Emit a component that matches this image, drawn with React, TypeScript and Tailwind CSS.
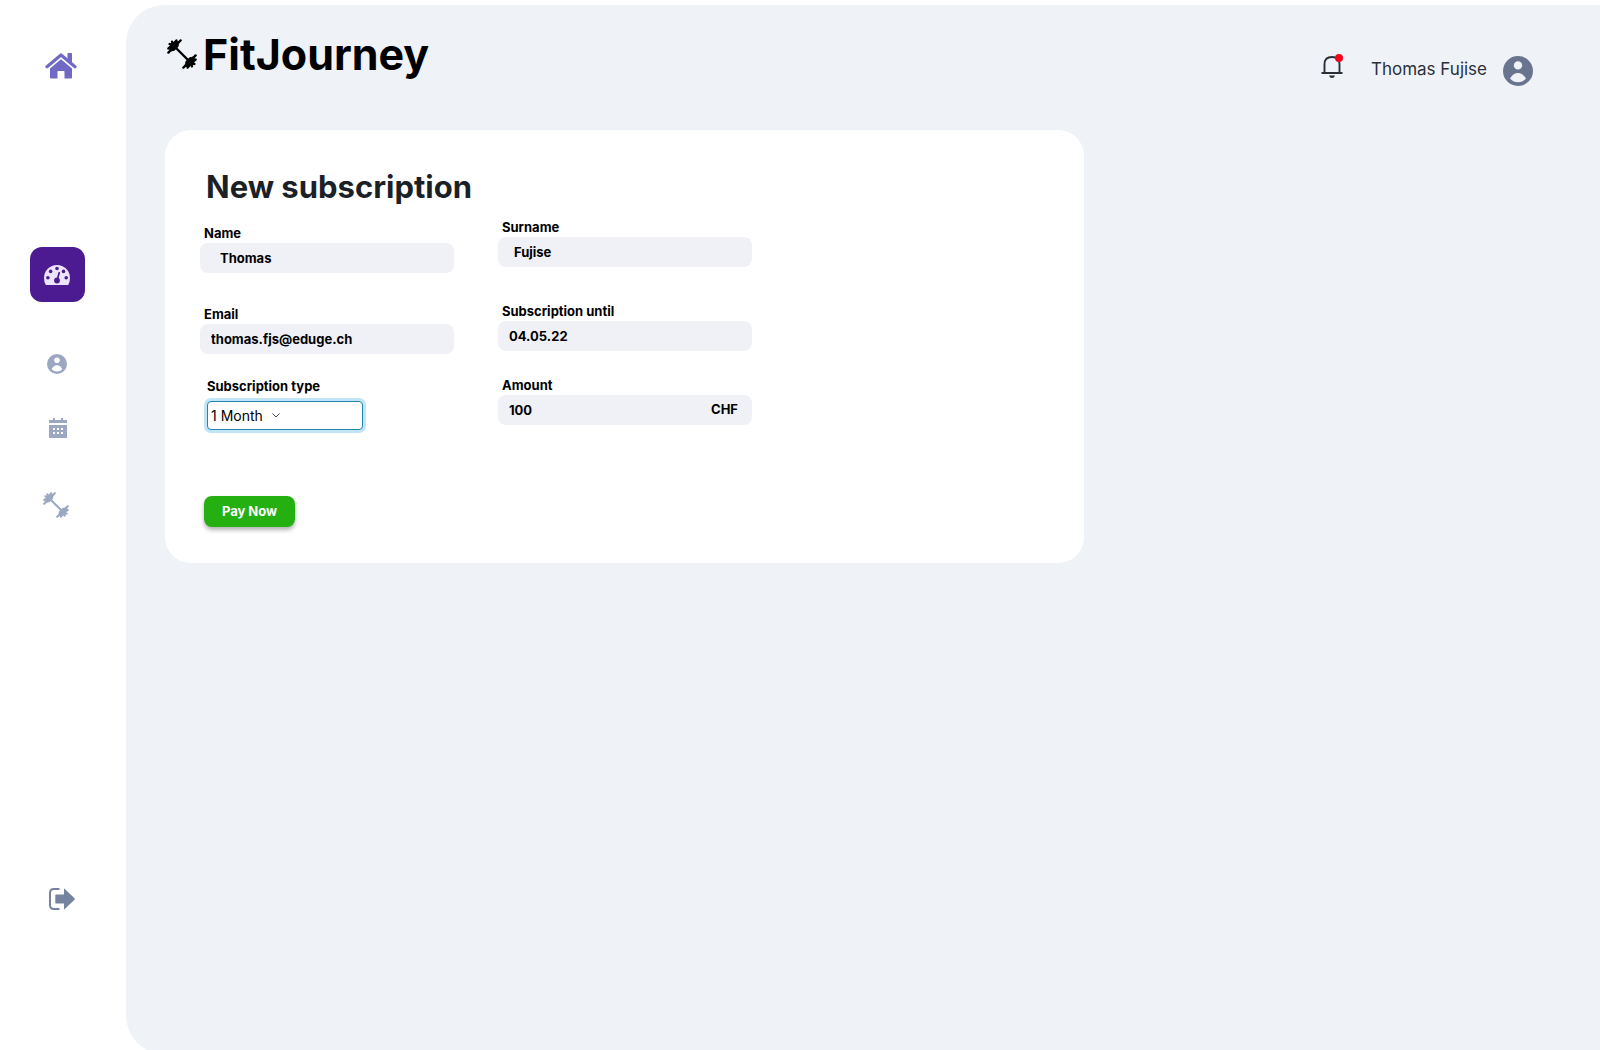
import { useState } from "react";
import type { ReactNode } from "react";

function HomeIcon() {
  return (
    <svg viewBox="0 0 32 26" className="h-[26px] w-8" fill="currentColor" aria-hidden="true">
      <path d="M22.500.700q0-.7.700-.7h3.100q.7 0 .7.700V10l-4.500-4z" />
      <path d="M2 13.700 16 2l14 11.700" fill="none" stroke="currentColor" strokeWidth="3.200" strokeLinecap="round" strokeLinejoin="round" />
      <path d="M16 6.200 27 15.400V24.500q0 1-1 1h-6.500v-7q0-.6-.6-.6h-5.800q-.6 0-.6.600v7H6q-1 0-1-1V15.400z" />
    </svg>
  );
}

function GaugeIcon() {
  return (
    <svg viewBox="0 0 26 20" className="h-5 w-[26px]" aria-hidden="true">
      <path d="M1.800 20Q0 17 0 13a13 13 0 0 1 26 0q0 4-1.800 7z" fill="currentColor" />
      <g fill="#4c1b92">
        <circle cx="3.900" cy="12.700" r="1.800" />
        <circle cx="6.600" cy="6.400" r="1.800" />
        <circle cx="13" cy="3.500" r="1.800" />
        <circle cx="19.500" cy="6.400" r="1.800" />
        <circle cx="22.200" cy="12.700" r="1.800" />
        <circle cx="13" cy="15.500" r="2.900" />
      </g>
      <path d="M13.200 15 15.200 7.700" stroke="#4c1b92" strokeWidth="1.700" strokeLinecap="round" />
    </svg>
  );
}

function PersonIcon({ className }: { className: string }) {
  return (
    <svg viewBox="0 0 30 30" className={className} fill="currentColor" fillRule="evenodd" aria-hidden="true">
      <path d="M15 0a15 15 0 1 1 0 30a15 15 0 0 1 0-30z M15 5.200a4.200 4.200 0 1 0 0 8.400a4.200 4.200 0 0 0 0-8.400z M7 22.500C9.500 18.500 12 17 15 17s5.500 1.500 8 5.500C20.500 25.300 18 26.200 15 26.200s-5.500-.9-8-3.700z" />
    </svg>
  );
}

function Dumbbell({ className }: { className: string }) {
  return (
    <svg viewBox="0 0 28 28" className={className} fill="none" stroke="currentColor" aria-hidden="true">
      <path d="M7 7 21 21" strokeWidth="2.300" />
      <g strokeLinecap="round">
        <path d="M4 9.500 9.500 4 M4.500 7 7 4.500 M6 9 9 6" strokeWidth="4" />
        <path d="M18.500 24 24 18.500 M21 23.500 23.500 21 M19 22 22 19" strokeWidth="4" />
        <path d="M1.300 12.700 3 11 M11 3 12.700 1.300 M1.300 8.800 3 7.500 M7.500 3 8.800 1.300 M2.500 4.700 4 5 M5 3.500 4.700 2.500" strokeWidth="2.200" />
        <path d="M15.300 26.700 17 25 M25 17 26.700 15.300 M26.700 19.200 25 20.500 M20.500 25 19.200 26.700 M25.500 23.300 24 23 M23 24.500 23.300 25.500" strokeWidth="2.200" />
      </g>
    </svg>
  );
}

function CalendarIcon() {
  return (
    <svg viewBox="0 0 18 20" className="h-5 w-[18px]" fill="currentColor" fillRule="evenodd" aria-hidden="true">
      <path d="M0 2h4V0h2v2h6V0h2v2h4v3H0z" />
      <path d="M0 7h18v13H0z M4 10v2h2v-2z M8 10v2h2v-2z M12 10v2h2v-2z M4 14v2h2v-2z M8 14v2h2v-2z M12 14v2h2v-2z" />
    </svg>
  );
}

function LogoutIcon() {
  return (
    <svg viewBox="0 0 26 22" className="h-[22px] w-[26px]" aria-hidden="true">
      <path d="M10.500 1H5Q1 1 1 5v12q0 4 4 4h5.500" fill="none" stroke="currentColor" strokeWidth="2" />
      <path d="M7 6.500h8V1.200q0-1 .8-.3L25.500 10.300q.6.700 0 1.400L15.800 21.100q-.8.700-.8-.3V15.500H7q-.7 0-.7-.7V7.200q0-.7.700-.7z" fill="currentColor" />
    </svg>
  );
}

function BellIcon() {
  return (
    <svg viewBox="0 0 22 24" className="h-6 w-[22px]" aria-hidden="true">
      <path d="M3.500 18V9.500Q3.500 2 11 2t7.500 7.500V18M0.500 18h21" fill="none" stroke="currentColor" strokeWidth="1.900" />
      <path d="M8 20.500h6q-.6 2.500-3 2.500t-3-2.500z" fill="currentColor" />
    </svg>
  );
}

function Field({
  id,
  label,
  value,
  className = "",
  inputClass = "px-[11px]",
  suffix,
}: {
  id: string;
  label: string;
  value: string;
  className?: string;
  inputClass?: string;
  suffix?: ReactNode;
}) {
  return (
    <div className={`flex flex-col ${className}`}>
      <label htmlFor={id} className="pl-1 text-[13px] leading-5 font-bold">
        {label}
      </label>
      <div className="flex h-[30px] items-center rounded-lg bg-[#f0f1f7] text-[13px] font-bold">
        <input
          id={id}
          defaultValue={value}
          className={`h-full min-w-0 flex-1 rounded-lg bg-transparent outline-none ${inputClass}`}
        />
        {suffix}
      </div>
    </div>
  );
}

const navLink = "flex items-center justify-center text-[#9ca8c1]";

export default function App() {
  const [plan, setPlan] = useState("1 Month");

  return (
    <div className="flex h-screen overflow-hidden bg-white pt-[5px] font-['Inter',sans-serif] text-black">
      <nav aria-label="Main" className="flex w-[126px] shrink-0 flex-col items-center pr-3 pt-12">
        <a href="#home" aria-label="Home" className="ml-2 flex text-[#7069c6]">
          <HomeIcon />
        </a>
        <a
          href="#dashboard"
          aria-label="Dashboard"
          className="mt-[168px] flex size-[55px] items-center justify-center rounded-xl bg-[#4c1b92] text-[#ece4fa]"
        >
          <GaugeIcon />
        </a>
        <a href="#profile" aria-label="Profile" className={`mt-[52px] ${navLink}`}>
          <PersonIcon className="size-5" />
        </a>
        <a href="#calendar" aria-label="Calendar" className={`mt-11 ml-0.5 ${navLink}`}>
          <CalendarIcon />
        </a>
        <a href="#workouts" aria-label="Workouts" className={`mt-[54px] mr-0.5 ${navLink}`}>
          <Dumbbell className="size-[26px]" />
        </a>
        <a href="#logout" aria-label="Log out" className="mt-auto mb-[140px] ml-2.5 flex text-[#76839f]">
          <LogoutIcon />
        </a>
      </nav>

      <main className="-mb-1 min-w-0 flex-1 rounded-l-[38px] bg-[#eff3f8] pl-[39px]">
        <header className="flex h-[125px] items-start justify-between pr-[67px]">
          <div className="flex items-center gap-1.5 pt-5 pl-0.5">
            <Dumbbell className="size-[30px]" />
            <span className="text-[43px] leading-[58px] font-bold">FitJourney</span>
          </div>
          <div className="flex items-center pt-[50px] text-[#2b3038]">
            <button type="button" aria-label="Notifications" className="relative mb-2 flex">
              <BellIcon />
              <span className="absolute -top-px right-0 size-2 rounded-full bg-[#f5041c]" />
            </button>
            <span className="ml-7 mb-1 text-[17px] leading-6">Thomas Fujise</span>
            <PersonIcon className="ml-4 size-[30px] text-[#69758f]" />
          </div>
        </header>

        <section className="w-full max-w-[919px] rounded-[26px] bg-white px-[35px] pt-9 pb-9">
          <h1 className="pl-1.5 text-[31px] leading-[42px] font-bold text-[#1b1f26]">New subscription</h1>
          <form onSubmit={(e) => e.preventDefault()}>
            <div className="flex gap-11">
              <div className="flex w-[254px] flex-col pt-[15px]">
                <Field id="name" label="Name" value="Thomas" inputClass="px-5" />
                <Field id="email" label="Email" value="thomas.fjs@eduge.ch" className="mt-[31px]" />
                <label htmlFor="plan" className="mt-[22px] pl-[7px] text-[13px] leading-5 font-bold">
                  Subscription type
                </label>
                <div className="relative mt-[5px] ml-[7px] h-[29px] w-[156px]">
                  <select
                    id="plan"
                    value={plan}
                    onChange={(e) => setPlan(e.target.value)}
                    className="block size-full appearance-none rounded-sm border border-[#2585ab] bg-white pl-[3px] text-sm ring-3 ring-[#bfe5f6] outline-none"
                  >
                    <option>1 Month</option>
                    <option>6 Months</option>
                    <option>1 Year</option>
                  </select>
                  <svg
                    viewBox="0 0 8 5"
                    className="pointer-events-none absolute top-3 left-[65px] h-[5px] w-2"
                    fill="none"
                    stroke="#444"
                    aria-hidden="true"
                  >
                    <path d="M0.500 0.500 4 4 7.500 0.500" />
                  </svg>
                </div>
              </div>
              <div className="flex w-[254px] flex-col pt-[9px]">
                <Field id="surname" label="Surname" value="Fujise" inputClass="px-4" />
                <Field id="until" label="Subscription until" value="04.05.22" className="mt-[34px]" />
                <Field
                  id="amount"
                  label="Amount"
                  value="100"
                  className="mt-6"
                  suffix={<span className="pr-[14px]">CHF</span>}
                />
              </div>
            </div>
            <button
              type="submit"
              className="mt-[66px] ml-1 flex h-[31px] w-[91px] items-center justify-center rounded-lg bg-[#23b010] text-[13px] font-bold text-white shadow-[0_3px_4px_rgba(0,0,0,0.3)]"
            >
              Pay Now
            </button>
          </form>
        </section>
      </main>
    </div>
  );
}
